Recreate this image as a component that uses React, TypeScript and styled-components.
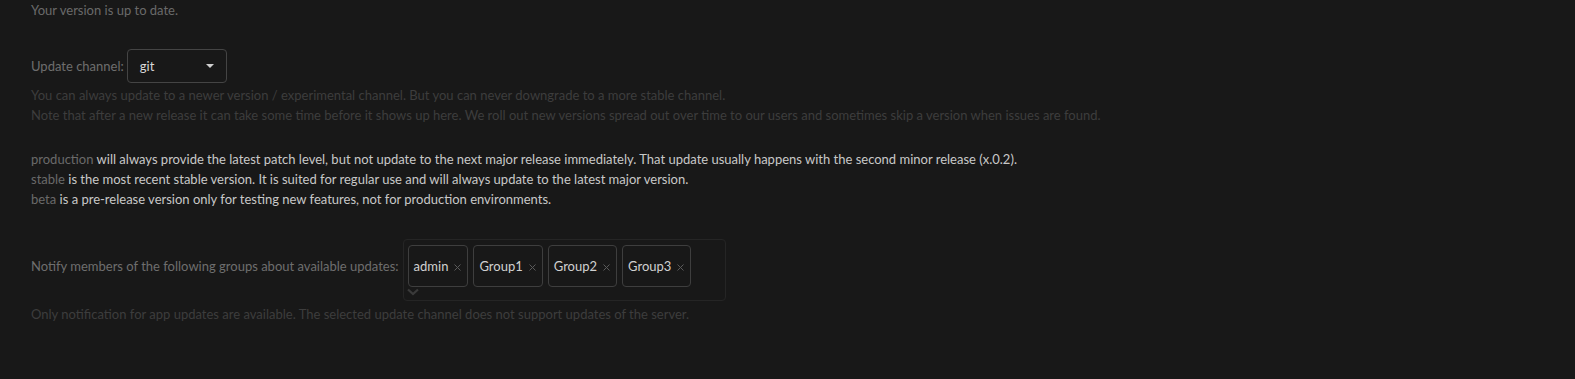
import React from 'react';
import styled, { createGlobalStyle } from 'styled-components';

const GlobalStyle = createGlobalStyle`
  html, body {
    margin: 0;
    padding: 0;
    background: #181818;
  }
  body {
    font-family: Lato, "Noto Sans", sans-serif;
    font-size: 13px;
    color: #d8d8d8;
  }
`;

const Page = styled.div`
  padding: 0 31px;
  min-height: 379px;
  box-sizing: border-box;
`;

const Muted = styled.p`
  margin: 0;
  color: #6a6a6a;
  line-height: 20px;
`;

const Hint = styled.p`
  margin: 0;
  color: #3d3d3d;
  line-height: 20px;
`;

const Row = styled.div<{ $top: number }>`
  display: flex;
  align-items: center;
  gap: 3px;
  margin-top: ${(p) => p.$top}px;
`;

const GroupRow = styled.div`
  display: flex;
  align-items: flex-start;
  gap: 4px;
  margin-top: 30px;
`;

const Label = styled.span`
  color: #6e6e6e;
`;

const GroupLabel = styled(Label)`
  line-height: 20px;
  padding-top: 17px;
`;

const Select = styled.div`
  width: 100px;
  height: 34px;
  box-sizing: border-box;
  border: 1px solid #444;
  border-radius: 4px;
  display: flex;
  align-items: center;
  justify-content: space-between;
  padding: 0 12px 0 12px;
  color: #d8d8d8;
`;

const Caret = styled.span`
  width: 0;
  height: 0;
  border-left: 4px solid transparent;
  border-right: 4px solid transparent;
  border-top: 4px solid #cfcfcf;
`;

const Block = styled.div<{ $top: number }>`
  margin-top: ${(p) => p.$top}px;
`;

const Para = styled.p`
  margin: 0;
  line-height: 20px;
  color: #c8c8c8;
`;

const Key = styled.span`
  color: #6a6a6a;
`;

const Multi = styled.div`
  width: 323px;
  height: 62px;
  box-sizing: border-box;
  border: 1px solid #252525;
  border-radius: 4px;
  position: relative;
  padding: 5px 4px;
  display: flex;
  gap: 5px;
  align-items: flex-start;
`;

const Tag = styled.div`
  height: 42px;
  box-sizing: border-box;
  border: 1px solid #3e3e3e;
  border-radius: 4px;
  display: flex;
  align-items: center;
  padding: 0 6px 0 5px;
  color: #d0d0d0;
  gap: 6px;
`;

const Remove = styled.svg`
  margin-top: 3px;
`;

const Chevron = styled.svg`
  position: absolute;
  left: 3px;
  bottom: 4px;
`;

export default function App() {
  const groups = ['admin', 'Group1', 'Group2', 'Group3'];
  return (
    <>
      <GlobalStyle />
      <Page>
        <Muted>Your version is up to date.</Muted>

        <Row $top={29}>
          <Label>Update channel:</Label>
          <Select>
            <span>git</span>
            <Caret />
          </Select>
        </Row>
        <Block $top={2}>
          <Hint>You can always update to a newer version / experimental channel. But you can never downgrade to a more stable channel.</Hint>
          <Hint>Note that after a new release it can take some time before it shows up here. We roll out new versions spread out over time to our users and sometimes skip a version when issues are found.</Hint>
        </Block>

        <Block $top={24}>
          <Para>
            <Key>production</Key> will always provide the latest patch level, but not update to the next major release immediately. That update usually happens with the second minor release (x.0.2).
          </Para>
          <Para>
            <Key>stable</Key> is the most recent stable version. It is suited for regular use and will always update to the latest major version.
          </Para>
          <Para>
            <Key>beta</Key> is a pre-release version only for testing new features, not for production environments.
          </Para>
        </Block>

        <GroupRow>
          <GroupLabel>Notify members of the following groups about available updates:</GroupLabel>
          <Multi>
            {groups.map((g) => (
              <Tag key={g}>
                {g}
                <Remove width="7" height="7" viewBox="0 0 7 7">
                  <path d="M0.5 0.5 L6.5 6.5 M6.5 0.5 L0.5 6.5" stroke="#5a5a5a" strokeWidth="1" fill="none" />
                </Remove>
              </Tag>
            ))}
            <Chevron width="12" height="8" viewBox="0 0 12 8">
              <path d="M1 1.5 L6 6 L11 1.5" stroke="#3a3a3a" strokeWidth="2.2" fill="none" />
            </Chevron>
          </Multi>
        </GroupRow>
        <Block $top={3}>
          <Hint>Only notification for app updates are available. The selected update channel does not support updates of the server.</Hint>
        </Block>
      </Page>
    </>
  );
}
